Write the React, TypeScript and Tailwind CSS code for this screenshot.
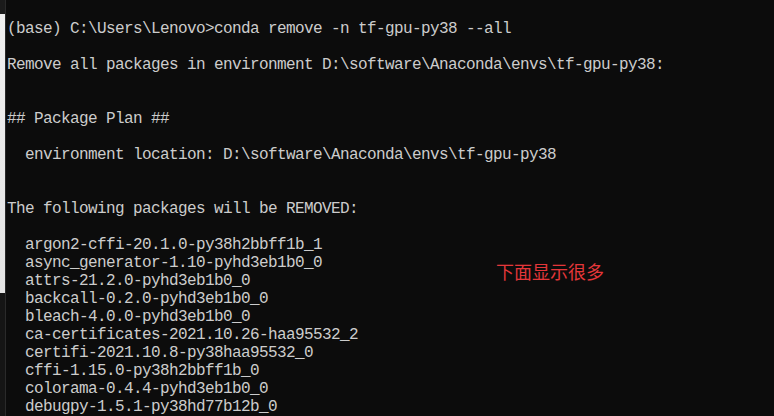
import React from 'react';

const lines: string[] = [
  '',
  '(base) C:\\Users\\Lenovo>conda remove -n tf-gpu-py38 --all',
  '',
  'Remove all packages in environment D:\\software\\Anaconda\\envs\\tf-gpu-py38:',
  '',
  '',
  '## Package Plan ##',
  '',
  '  environment location: D:\\software\\Anaconda\\envs\\tf-gpu-py38',
  '',
  '',
  'The following packages will be REMOVED:',
  '',
  '  argon2-cffi-20.1.0-py38h2bbff1b_1',
  '  async_generator-1.10-pyhd3eb1b0_0',
  '  attrs-21.2.0-pyhd3eb1b0_0',
  '  backcall-0.2.0-pyhd3eb1b0_0',
  '  bleach-4.0.0-pyhd3eb1b0_0',
  '  ca-certificates-2021.10.26-haa95532_2',
  '  certifi-2021.10.8-py38haa95532_0',
  '  cffi-1.15.0-py38h2bbff1b_0',
  '  colorama-0.4.4-pyhd3eb1b0_0',
  '  debugpy-1.5.1-py38hd77b12b_0',
];

const App: React.FC = () => {
  return (
    <div className="relative flex w-[774px] h-[416px] overflow-hidden bg-[#0c0c0c]">
      {/* window behind, peeking at the left edge */}
      <div className="flex flex-col w-[5px] shrink-0">
        <div className="h-[14px] bg-[#1b1b1b]" />
        <div className="h-[279px] bg-gradient-to-b from-[#f0f0f0] to-[#e4e4e4]" />
        <div className="flex-1 bg-[#151515]" />
      </div>
      <div className="w-px shrink-0 bg-[#2a2a2a]" />

      {/* console text */}
      <div
        className="flex-1 pl-px pt-[2px] text-[16px] leading-[18px] tracking-[-0.6px] text-[#cccccc]"
        style={{ fontFamily: '"Liberation Mono", "DejaVu Sans Mono", monospace' }}
      >
        {lines.map((line, i) => (
          <div key={i} className="h-[18px] whitespace-pre">
            {line}
          </div>
        ))}
      </div>

      {/* red annotation */}
      <div
        className="absolute left-[496px] top-[261px] text-[18px] leading-[20px] text-[#e4373a]"
        style={{ fontFamily: '"Noto Sans CJK SC", sans-serif' }}
      >
        下面显示很多
      </div>
    </div>
  );
};

export default App;
